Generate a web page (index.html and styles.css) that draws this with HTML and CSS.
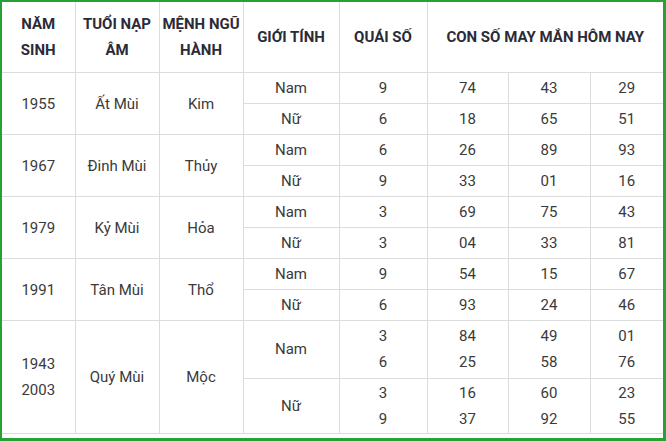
FILE: index.html
```html
<!DOCTYPE html>
<html lang="vi">
<head>
<meta charset="utf-8">
<link rel="stylesheet" href="styles.css">
</head>
<body>
<div class="frame">
<table class="luck">
<colgroup>
<col class="c1"><col class="c2"><col class="c3"><col class="c4"><col class="c5"><col class="c6"><col class="c7"><col class="c8">
</colgroup>
<thead>
<tr><th>NĂM<br>SINH</th><th>TUỔI NẠP<br>ÂM</th><th>MỆNH NGŨ<br>HÀNH</th><th>GIỚI TÍNH</th><th>QUÁI SỐ</th><th colspan="3">CON SỐ MAY MẮN HÔM NAY</th></tr>
</thead>
<tbody>
<tr><td rowspan="2">1955</td><td rowspan="2">Ất Mùi</td><td rowspan="2">Kim</td><td>Nam</td><td>9</td><td>74</td><td>43</td><td>29</td></tr>
<tr><td>Nữ</td><td>6</td><td>18</td><td>65</td><td>51</td></tr>
<tr><td rowspan="2">1967</td><td rowspan="2">Đinh Mùi</td><td rowspan="2">Thủy</td><td>Nam</td><td>6</td><td>26</td><td>89</td><td>93</td></tr>
<tr><td>Nữ</td><td>9</td><td>33</td><td>01</td><td>16</td></tr>
<tr><td rowspan="2">1979</td><td rowspan="2">Kỷ Mùi</td><td rowspan="2">Hỏa</td><td>Nam</td><td>3</td><td>69</td><td>75</td><td>43</td></tr>
<tr><td>Nữ</td><td>3</td><td>04</td><td>33</td><td>81</td></tr>
<tr><td rowspan="2">1991</td><td rowspan="2">Tân Mùi</td><td rowspan="2">Thổ</td><td>Nam</td><td>9</td><td>54</td><td>15</td><td>67</td></tr>
<tr><td>Nữ</td><td>6</td><td>93</td><td>24</td><td>46</td></tr>
<tr class="dbl"><td rowspan="2">1943<br>2003</td><td rowspan="2">Quý Mùi</td><td rowspan="2">Mộc</td><td>Nam</td><td>3<br>6</td><td>84<br>25</td><td>49<br>58</td><td>01<br>76</td></tr>
<tr class="dbl2"><td>Nữ</td><td>3<br>9</td><td>16<br>37</td><td>60<br>92</td><td>23<br>55</td></tr>
</tbody>
</table>
</div>
</body>
</html>
```
FILE: styles.css
```css
html, body {
  margin: 0;
  padding: 0;
  background: #fff;
}
.frame {
  width: 666px;
  height: 441px;
  box-sizing: border-box;
  border-style: solid;
  border-color: #27a135;
  border-width: 2px 3px 3px 2px;
  overflow: hidden;
}
.luck {
  width: 661px;
  border-collapse: collapse;
  table-layout: fixed;
  font-family: Roboto, "Liberation Sans", sans-serif;
  font-size: 15px;
  color: #3a3a3a;
}
.c1 { width: 73px; }
.c2 { width: 84px; }
.c3 { width: 84px; }
.c4 { width: 96px; }
.c5 { width: 88px; }
.c6 { width: 81px; }
.c7 { width: 82px; }
.c8 { width: 73px; }
.luck th, .luck td {
  border: 1px solid #dcdcdc;
  text-align: center;
  vertical-align: middle;
  padding: 2px 2px;
  line-height: 26px;
}
.luck th {
  font-weight: 700;
  color: #2b2b38;
  height: 70px;
  padding: 0 2px;
  border-top: none;
}
.luck tr > :first-child { border-left: none; }
.luck tr > :last-child { border-right: none; }
.luck tbody tr:first-child td:first-child { border-left: none; }
.luck tr.dbl td { height: 52px; padding: 2px 2px 3px; }
.luck tr.dbl2 td { height: 52px; padding: 1px 2px 1px; }
```
